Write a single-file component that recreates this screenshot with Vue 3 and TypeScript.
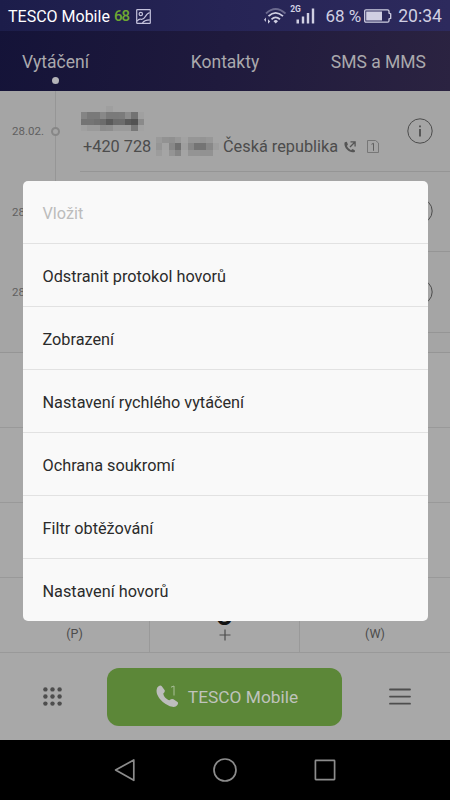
<script setup lang="ts">
interface Mosaic { width: number; cells: string[][] }

const menu: { label: string; disabled?: boolean }[] = [
  { label: 'Vložit', disabled: true },
  { label: 'Odstranit protokol hovorů' },
  { label: 'Zobrazení' },
  { label: 'Nastavení rychlého vytáčení' },
  { label: 'Ochrana soukromí' },
  { label: 'Filtr obtěžování' },
  { label: 'Nastavení hovorů' },
]

const tabs = ['Vytáčení', 'Kontakty', 'SMS a MMS']

// Gray levels of the pixelated caller name and number, row by row
const nameMosaic: Mosaic = {
  width: 10,
  cells: [
    ['a5', 'a5', 'a5', 'a5', '9f', 'a5', 'a5', 'a5', 'a5', 'a5'],
    ['84', '79', '79', '88', '7a', '7a', '7b', '8c', '72', 'a0'],
    ['74', '74', '70', '6c', '5a', '6b', '6c', '5a', '52', '8a'],
    ['a0', '9a', '9a', '8c', '8e', '9a', '9a', '9a', '78', 'a2'],
  ],
}
const numberMosaic: Mosaic = {
  width: 10,
  cells: [
    ['9a', '92', '90', '98', 'a2', '96', '96', '94', '98', 'a5'],
    ['95', 'a3', '88', '70', '9e', '88', '74', '74', '88', '9e'],
    ['9c', 'a5', '94', '86', 'a4', '94', '94', '92', '92', 'a5'],
  ],
}
const gray = (v: string): string => `#${v}${v}${v}`
</script>

<template>
  <div class="phone">
    <div class="top">
      <header class="status">
        <span class="carrier">TESCO Mobile</span>
        <span class="temp">68</span>
        <svg class="pic" width="15" height="15" viewBox="0 0 15 15">
          <rect x=".7" y=".7" width="13.6" height="13.6" rx=".6" />
          <circle cx="4.8" cy="5" r="1.7" />
          <path d="M1 12.200Q3 9.500 5 10.300T9.500 7.300 13.800 4M6.500 14Q8 11 13.800 10.800" />
        </svg>
        <svg class="radio" width="54" height="22" viewBox="0 0 54 22">
          <g fill="none" stroke="#d0cfe2" stroke-width="1.800">
            <path d="M2 10.500Q11.500 1.500 21.500 10.500" opacity=".4" />
            <path d="M4.500 13.200Q11.500 6.500 19 13.200M7.500 16.300Q11.500 12.500 16 16.300" />
          </g>
          <path d="M9.500 18.200Q11.700 16 14 18.200L11.700 20.500zM1.900 14.500v4.500L0 16.700zM4 16.200l2.200 2.300L4 20.800z" fill="#d0cfe2" />
          <text x="26.200" y="9" class="net">2G</text>
          <path d="M32.500 16.500h2.500v4h-2.500zM37.800 13.500h2.400v7h-2.400zM42.800 10h2.400v10.500h-2.400zM47.800 5.500h2.400v15h-2.400z" fill="#d0cfe2" />
        </svg>
        <span class="percent">68 %</span>
        <svg class="battery" width="28" height="14" viewBox="0 0 28 14">
          <path d="M2 .8H23.500Q25 .8 25 2.300V4l1.700 .8v4.500L25 10v1.700q0 1.500-1.500 1.500H2Q.7 13.200 .7 11.700V2.300Q.7 .8 2 .8z" fill="none" stroke="#d0cfe2" stroke-width="1.300" />
          <path d="M2.200 2.500H18v9H2.200z" fill="#d0cfe2" />
        </svg>
        <span class="clock">20:34</span>
      </header>
      <nav class="tabs">
        <div v-for="(tab, i) in tabs" :key="tab" class="tab" :class="{ active: i === 0 }">{{ tab }}</div>
      </nav>
    </div>

    <main class="log">
      <div v-for="n in 3" :key="n" class="call">
        <div class="date">28.02.</div>
        <div class="rail"><i></i></div>
        <div class="entry">
          <div class="who">
            <template v-if="n === 1">
              <svg class="name" width="63" height="25" viewBox="0 0 10 4" preserveAspectRatio="none" shape-rendering="crispEdges">
                <template v-for="(row, y) in nameMosaic.cells" :key="y">
                  <rect v-for="(c, x) in row" :key="x" :x="x" :y="y" width="1" height="1" :fill="gray(c)" />
                </template>
              </svg>
              <div class="number">
                <span class="digits">+420 728</span>
                <svg class="blur" width="63" height="19" viewBox="0 0 10 3" preserveAspectRatio="none" shape-rendering="crispEdges">
                  <template v-for="(row, y) in numberMosaic.cells" :key="y">
                    <rect v-for="(c, x) in row" :key="x" :x="x" :y="y" width="1" height="1" :fill="gray(c)" />
                  </template>
                </svg>
                <span class="country">Česká republika</span>
                <svg class="out" width="12" height="12" viewBox="0 0 12 12">
                  <path d="M.8 1.200C-.1 3 .6 6 3 8.600S9 12 11 10.700L10.800 9.200 8.500 8 7 9.200Q4 7.800 2.900 5L3.900 3.600 2.800 .8z" fill="#555" />
                  <path d="M6 6 11 1M6.500 .9h4.600v4.600" fill="none" stroke="#555" stroke-width="1.300" />
                </svg>
                <svg class="sim" width="12" height="13" viewBox="0 0 12 13">
                  <path d="M.5 .5h8L11.500 3v9.500H.5z" fill="none" stroke="#777" />
                  <path d="M4.500 4.300 6.500 3.300v7.500" fill="none" stroke="#606060" />
                </svg>
              </div>
            </template>
          </div>
          <svg class="info" width="26" height="26" viewBox="0 0 26 26">
            <circle cx="13" cy="13" r="12.200" fill="none" stroke="#4c4c4c" />
            <path d="M12.200 7.500h1.600v1.700h-1.600zM12.200 11h1.600v7.500h-1.600z" fill="#444" />
          </svg>
        </div>
      </div>
    </main>

    <section class="keypad">
      <div v-for="k in 9" :key="k" class="key"></div>
      <div class="key last"><small>(P)</small></div>
      <div class="key last"><b>0</b><svg width="12" height="12" viewBox="0 0 12 12"><path d="M6 .5v11M.5 6h11" stroke="#4c4c4c" stroke-width="1.200" /></svg></div>
      <div class="key last"><small>(W)</small></div>
    </section>

    <footer class="actions">
      <svg class="dots" width="19" height="19" viewBox="0 0 19 19">
        <template v-for="y in 3" :key="y">
          <circle v-for="x in 3" :key="x" :cx="x * 7.1 - 4.7" :cy="y * 7.1 - 4.7" r="2.2" fill="#4d4d4d" />
        </template>
      </svg>
      <button class="dial">
        <svg width="23" height="23" viewBox="0 0 23 23">
          <path d="M1.300 2.500C3 .4 4.600-.1 5.800 1.200L8.700 5.300Q9.300 6.500 7.300 8.500C7.500 11.500 10.500 14.500 13.500 15.300Q15.500 13.200 17.500 14.200L21.500 17C22.800 18.200 21.700 20 19.700 21.500 14.500 24-.5 14 .6 5Q.8 3.500 1.300 2.500z" fill="#bdbdbd" />
          <path d="M15 2.200 18 1v9.500" fill="none" stroke="#a9bf98" stroke-width="1" />
        </svg>
        <span>TESCO Mobile</span>
      </button>
      <svg class="lines" width="22" height="17" viewBox="0 0 22 17">
        <path d="M1 1.500h20M1 8.600h20M1 15.700h20" stroke="#4d4d4d" stroke-width="1.800" stroke-linecap="round" />
      </svg>
    </footer>

    <nav class="system">
      <svg width="22" height="24" viewBox="0 0 22 24"><path d="M19.800 2v20.300L1.600 12z" /></svg>
      <svg width="24" height="24" viewBox="0 0 24 24"><circle cx="12" cy="12" r="11" /></svg>
      <svg width="22" height="24" viewBox="0 0 22 24"><rect x="1.400" y="2.400" width="19.200" height="19.200" rx=".5" /></svg>
    </nav>

    <div class="menu">
      <div v-for="item in menu" :key="item.label" class="item" :class="{ disabled: item.disabled }">{{ item.label }}</div>
    </div>
  </div>
</template>

<style>
body { margin: 0; background: #000; }
</style>

<style scoped>
.phone { position: relative; width: 450px; height: 800px; overflow: hidden; display: flex; flex-direction: column; background: #a8a8a8; font-family: Roboto, sans-serif; color: #4c4c4c; }
svg { display: block; flex: none; }
.top { height: 91px; flex: none; background: linear-gradient(100deg, #141338 0%, #1f1a3d 50%, #2b2341 100%); }
.status { height: 31px; box-sizing: border-box; padding: 1px 8px 0; display: flex; align-items: center; background: linear-gradient(90deg, #1c1d4a, #262455 50%, #2d2a5d); color: #d0cfe2; font-size: 18px; white-space: nowrap; }
.carrier { color: #fff; font-size: 16px; width: 102px; }
.temp { color: #6fa832; font-size: 15px; font-weight: 500; margin-left: 4px; width: 18px; letter-spacing: -1px; }
.pic { margin-left: 5px; fill: none; stroke: #c4c2dc; stroke-width: 1.200; }
.radio { margin: -4px 0 0 113px; }
.net { font: 700 8.500px Roboto, sans-serif; fill: #d0cfe2; }
.percent { margin-left: 7px; width: 36px; font-size: 17px; }
.battery { margin-left: 3px; }
.clock { margin-left: 6px; font-size: 17.600px; }
.tabs { height: 60px; display: grid; grid-template-columns: 1fr 1fr 1fr; padding: 0 24px 0 22px; color: #aaa9ad; font-size: 17.500px; line-height: 63px; box-sizing: border-box; white-space: nowrap; }
.tab { display: flex; flex-direction: column; align-items: center; height: 60px; justify-self: center; padding-left: 2px; }
.tab:first-child { justify-self: start; padding: 0; }
.tab:last-child { justify-self: end; padding: 0; }
.tab.active::after { content: ''; width: 7px; height: 7px; border-radius: 50%; background: #b4b4b8; margin-top: -17px; }
.log { height: 262px; flex: none; box-sizing: border-box; background: #a5a5a5; border-bottom: 1px solid #959595; }
.call { height: 80.500px; display: flex; }
.date { width: 50px; box-sizing: border-box; padding: 0 0 0 12px; line-height: 80px; font-size: 11.500px; color: #606060; }
.rail { width: 10px; display: flex; align-items: center; justify-content: center; background: linear-gradient(#969696, #969696) 5px 0 / 1px 100% no-repeat; }
.rail i { width: 9px; height: 9px; box-sizing: border-box; border: 2px solid #878787; border-radius: 50%; background: #a5a5a5; }
.entry { flex: 1; margin-left: 20px; border-bottom: 1px solid #959595; display: flex; align-items: center; padding-right: 17px; }
.who { flex: 1; align-self: stretch; padding: 15px 0 0 1px; }
.number { display: flex; align-items: center; height: 21px; margin-top: 5px; padding-left: 2px; font-size: 16.300px; white-space: nowrap; }
.digits { width: 73px; }
.country { margin: 0 5px 0 4px; width: 116px; }
.sim { margin-left: 11px; }
.keypad { height: 300px; flex: none; display: grid; grid-template-columns: 150px 150px 150px; grid-template-rows: repeat(4, 75px); }
.key { border-right: 1px solid #999; border-bottom: 1px solid #999; }
.key:nth-child(3n) { border-right: 0; }
.key.last { display: flex; flex-direction: column; align-items: center; justify-content: flex-end; box-sizing: border-box; padding-bottom: 11px; }
.key small { font-size: 12.500px; line-height: 15px; }
.key b { font-size: 33px; font-weight: 500; line-height: 33px; color: #111; margin-bottom: -1px; }
.actions { height: 87px; flex: none; display: flex; align-items: center; justify-content: space-between; padding: 0 39px 0 43px; }
.dial { width: 235px; height: 58px; box-sizing: border-box; padding: 0 0 0 5px; border: 0; border-radius: 12px; background: #5c8738; color: #bfc3bc; display: flex; align-items: center; justify-content: center; font: 17.350px Roboto, sans-serif; gap: 9px; margin-right: 2px; }
.system { height: 60px; flex: none; background: #000; display: flex; justify-content: center; align-items: center; gap: 77px; fill: none; stroke: #8c8c8c; stroke-width: 1.700; stroke-linejoin: round; }
.menu { position: absolute; left: 22.500px; top: 181px; width: 405px; height: 440px; border-radius: 5px; background: #f9f9f9; overflow: hidden; }
.item { height: 63px; box-sizing: border-box; border-bottom: 1px solid #e2e2e2; padding: 1px 0 0 20px; font-size: 16.250px; line-height: 63px; color: #2b2b2b; }
.item:last-child { border: 0; }
.item.disabled { color: #bcbcbc; }
</style>
